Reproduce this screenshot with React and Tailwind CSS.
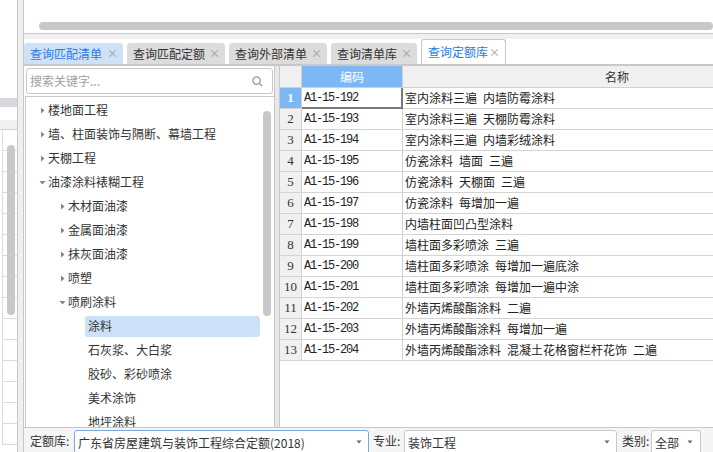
import React from 'react';

const treeItems = [
  { level: 0, label: '楼地面工程', arrow: 'right' },
  { level: 0, label: '墙、柱面装饰与隔断、幕墙工程', arrow: 'right' },
  { level: 0, label: '天棚工程', arrow: 'right' },
  { level: 0, label: '油漆涂料裱糊工程', arrow: 'down' },
  { level: 1, label: '木材面油漆', arrow: 'right' },
  { level: 1, label: '金属面油漆', arrow: 'right' },
  { level: 1, label: '抹灰面油漆', arrow: 'right' },
  { level: 1, label: '喷塑', arrow: 'right' },
  { level: 1, label: '喷刷涂料', arrow: 'down' },
  { level: 2, label: '涂料', selected: true },
  { level: 2, label: '石灰浆、大白浆' },
  { level: 2, label: '胶砂、彩砂喷涂' },
  { level: 2, label: '美术涂饰' },
  { level: 2, label: '地坪涂料' },
];

const rows = [
  ['A1-15-192', '室内涂料三遍 内墙防霉涂料'],
  ['A1-15-193', '室内涂料三遍 天棚防霉涂料'],
  ['A1-15-194', '室内涂料三遍 内墙彩绒涂料'],
  ['A1-15-195', '仿瓷涂料 墙面 三遍'],
  ['A1-15-196', '仿瓷涂料 天棚面 三遍'],
  ['A1-15-197', '仿瓷涂料 每增加一遍'],
  ['A1-15-198', '内墙柱面凹凸型涂料'],
  ['A1-15-199', '墙柱面多彩喷涂 三遍'],
  ['A1-15-200', '墙柱面多彩喷涂 每增加一遍底涂'],
  ['A1-15-201', '墙柱面多彩喷涂 每增加一遍中涂'],
  ['A1-15-202', '外墙丙烯酸酯涂料 二遍'],
  ['A1-15-203', '外墙丙烯酸酯涂料 每增加一遍'],
  ['A1-15-204', '外墙丙烯酸酯涂料 混凝土花格窗栏杆花饰 二遍'],
];

const tabs = [
  { label: '查询匹配清单', w: 'w-[99px]', kind: 'hover' },
  { label: '查询匹配定额', w: 'w-[98px]', kind: 'normal' },
  { label: '查询外部清单', w: 'w-[98px]', kind: 'normal' },
  { label: '查询清单库', w: 'w-[86px]', kind: 'normal' },
  { label: '查询定额库', w: 'w-[85px]', kind: 'active' },
];

function Arrow({ dir }) {
  if (dir === 'down') {
    return (
      <svg width="7" height="7" viewBox="0 0 7 7">
        <polygon points="0.5,2 6.5,2 3.5,5.5" fill="#888" />
      </svg>
    );
  }
  return (
    <svg width="7" height="7" viewBox="0 0 7 7">
      <polygon points="2,0.5 5.5,3.5 2,6.5" fill="#888" />
    </svg>
  );
}

function Caret() {
  return (
    <svg width="6" height="4" viewBox="0 0 6 4">
      <polygon points="0.5,0.5 5.5,0.5 3,3.5" fill="#666" />
    </svg>
  );
}

function BgSliver() {
  return (
    <div className="w-[17px] bg-white flex flex-col relative shrink-0">
      <div className="h-[98px]" />
      <div className="h-[9px] bg-[#d8d8dc]" />
      <div className="h-[13px]" />
      <div className="h-[10px] bg-[#f0f0f0] border-b border-[#d0d0d0]" />
      {Array.from({ length: 15 }).map((_, i) => (
        <div key={i} className="h-[21px] border-b border-l border-[#dcdcdc] ml-[2px]" />
      ))}
      <div className="absolute left-[7px] top-[145px] w-[8px] h-[170px] rounded-full bg-[#c8c8c8]" />
    </div>
  );
}

function Tabs() {
  return (
    <div className="h-[25px] bg-white flex items-end gap-[4px] shrink-0">
      {tabs.map((t) => {
        const base = 'flex items-center justify-between pl-[6px] pr-[5px] rounded-t-[3px] text-[12px] ' + t.w;
        let cls = base + ' h-[21px] bg-[#dcdcdc] text-[#333]';
        if (t.kind === 'hover') cls = base + ' h-[21px] bg-[#cfe1f7] text-[#2b7de0]';
        if (t.kind === 'active') cls = base + ' h-[25px] bg-white border border-b-0 border-[#c8c8c8] text-[#2b7de0]';
        return (
          <div key={t.label} className={cls}>
            <span>{t.label}</span>
            <span className="text-[11px] text-[#9a9a9a] leading-none">×</span>
          </div>
        );
      })}
    </div>
  );
}

function TreePanel() {
  return (
    <div className="w-[250px] bg-white flex flex-col shrink-0">
      <div className="h-[30px] pt-[2px] pl-[2px] pr-[1px]">
        <div className="h-[26px] border border-[#c8c8c8] rounded-[3px] flex items-center justify-between pl-[3px] pr-[9px]">
          <span className="text-[12px] text-[#a0a0a0]">搜索关键字...</span>
          <svg width="11" height="11" viewBox="0 0 11 11" fill="none" stroke="#9a9a9a" strokeWidth="1.3">
            <circle cx="4.6" cy="4.6" r="3.7" />
            <line x1="7.4" y1="7.4" x2="10.2" y2="10.2" />
          </svg>
        </div>
      </div>
      <div className="flex-1 flex border-l border-t border-[#c8c8c8] ml-[1px] overflow-hidden">
        <div className="flex-1 pt-[1px]">
          {treeItems.map((it) => {
            const pad = it.level === 0 ? 'pl-[13px]' : it.level === 1 ? 'pl-[33px]' : 'pl-[59px]';
            return (
              <div key={it.label} className={'h-[24px] flex items-center ' + pad}>
                {it.level < 2 ? (
                  <>
                    <span className="w-[9px] flex items-center">
                      <Arrow dir={it.arrow} />
                    </span>
                    <span className="text-[12px] text-[#333]">{it.label}</span>
                  </>
                ) : (
                  <span
                    className={
                      'h-[21px] w-[175px] flex items-center pl-[3px] rounded-[3px] text-[12px] text-[#333] ' +
                      (it.selected ? 'bg-[#cce0f7]' : '')
                    }
                  >
                    {it.label}
                  </span>
                )}
              </div>
            );
          })}
        </div>
        <div className="w-[8px] mr-[3px] pt-[14px]">
          <div className="h-[205px] rounded-full bg-[#c8c8c8]" />
        </div>
      </div>
    </div>
  );
}

function Table() {
  return (
    <div className="flex-1 bg-white overflow-hidden">
      <div className="w-[560px]">
        <div className="h-[22px] flex border-b border-[#d0d0d0]">
          <div className="w-[22px] bg-[#f0f0f0] border-r border-[#d0d0d0]" />
          <div className="w-[101px] bg-[#7db8f6] text-white flex items-center justify-center border-r border-[#d0d0d0]">
            编码
          </div>
          <div className="w-[428px] bg-[#f0f0f0] text-[#333] flex items-center justify-center">名称</div>
        </div>
        {rows.map(([code, name], i) => (
          <div key={code} className="h-[21px] flex border-b border-[#d4d4d4]">
            <div
              className={
                "w-[22px] border-r border-[#d0d0d0] flex items-center justify-center font-['Liberation_Serif',serif] text-[13px] " +
                (i === 0 ? 'bg-[#7db8f6] text-white font-bold' : 'bg-[#f0f0f0] text-[#333]')
              }
            >
              {i + 1}
            </div>
            <div
              className={
                "w-[101px] flex items-center pl-[2px] font-['Liberation_Mono',monospace] text-[12px] tracking-[-1.2px] text-[#222] " +
                (i === 0 ? 'border-r-2 border-b-2 border-[#7a7a7a] -mb-px' : 'border-r border-[#d0d0d0]')
              }
            >
              {code}
            </div>
            <div className="w-[428px] flex items-center pl-[2px] text-[12px] text-[#222] whitespace-pre">
              {name.replace(/ /g, '\u2002')}
            </div>
          </div>
        ))}
      </div>
    </div>
  );
}

function BottomBar() {
  return (
    <div className="h-[25px] border-t border-[#c8c8c8] bg-[#f5f5f5] flex items-start pt-[2px] pl-[6px] text-[12px] text-[#333] shrink-0 overflow-hidden">
      <span className="w-[40px] h-[22px] flex items-center">定额库:</span>
      <div className="ml-[4px] w-[295px] h-[28px] border border-[#7ea6de] rounded-t-[3px] bg-white flex items-start justify-between pl-[3px] pr-[6px] pt-[3px]">
        <span>广东省房屋建筑与装饰工程综合定额(2018)</span>
        <span className="pt-[6px]"><Caret /></span>
      </div>
      <span className="ml-[4px] w-[28px] h-[22px] flex items-center whitespace-nowrap">专业:</span>
      <div className="ml-[3px] w-[213px] h-[28px] border border-[#c8c8c8] rounded-t-[3px] bg-white flex items-start justify-between pl-[3px] pr-[6px] pt-[3px]">
        <span>装饰工程</span>
        <span className="pt-[6px]"><Caret /></span>
      </div>
      <span className="ml-[5px] w-[28px] h-[22px] flex items-center whitespace-nowrap">类别:</span>
      <div className="ml-[1px] w-[50px] h-[28px] border border-[#c8c8c8] rounded-t-[3px] bg-white flex items-start justify-between pl-[3px] pr-[7px] pt-[3px]">
        <span>全部</span>
        <span className="pt-[6px]"><Caret /></span>
      </div>
    </div>
  );
}

export default function App() {
  return (
    <div className="w-[713px] h-[452px] overflow-hidden flex bg-[#f0f0f0] font-['Noto_Sans_CJK_SC','Noto_Sans',sans-serif] text-[12px] text-[#333]">
      <BgSliver />
      <div className="w-[6px] bg-[#f0f0f0] border-l border-[#c8c8c8] shrink-0" />
      <div className="flex-1 flex flex-col border-l border-[#c8c8c8] min-w-0">
        {/* top panel with horizontal scrollbar */}
        <div className="h-[34px] bg-white border-b border-[#c8c8c8] pt-[22px] pl-[15px] shrink-0">
          <div className="h-[8px] rounded-full bg-[#c8c8c8]" />
        </div>
        <div className="h-[5px] bg-[#f0f0f0] shrink-0" />
        <Tabs />
        <div className="h-[2px] bg-[#c8c8c8] shrink-0" />
        <div className="flex-1 flex min-h-0">
          <TreePanel />
          <div className="w-[6px] bg-[#e8e8e8] border-x border-[#c8c8c8] shrink-0" />
          <Table />
        </div>
        <BottomBar />
      </div>
    </div>
  );
}
